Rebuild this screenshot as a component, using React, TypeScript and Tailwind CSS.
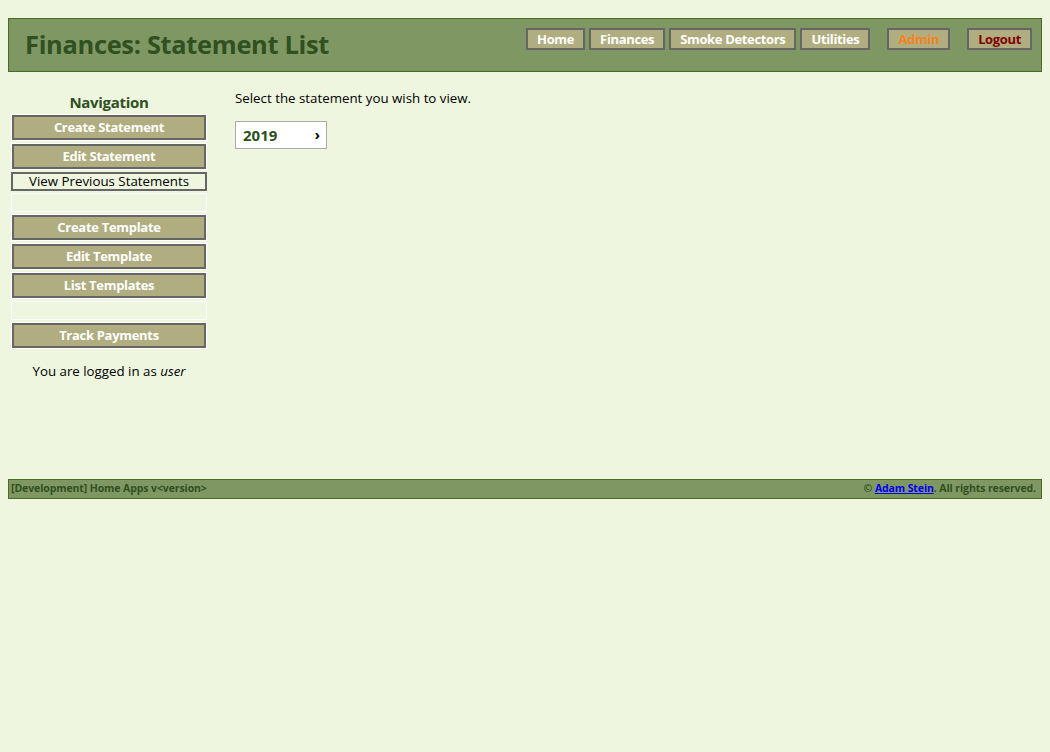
import React from "react";

const navBtn =
  "block w-full h-[25px] bg-[#b0ae80] border-2 border-[#666666] text-white font-bold text-[13px] tracking-[-0.3px] leading-[21px] text-center";

const topBtn =
  "h-[22px] px-[9px] bg-[#b0ae80] border-2 border-[#666666] leading-[18px] text-[13px] tracking-[-0.35px]";

function Cell({ children }: { children?: React.ReactNode }) {
  return <div className="border border-white h-[27px] w-[196px]">{children}</div>;
}

export default function App() {
  return (
    <div
      className="min-h-[752px] w-full bg-[#eef6df] pt-[18px] px-[8px]"
      style={{ fontFamily: '"Open Sans", "Noto Sans", sans-serif' }}
    >
      <header className="h-[54px] border border-[#4a6b24] bg-[#7f9763] flex items-center justify-between pl-[16px] pr-[9px]">
        <h1 className="text-[25.4px] font-bold text-[#2f5020] tracking-[-0.3px] leading-[30px] mb-[2px]">
          Finances: Statement List
        </h1>
        <nav className="flex items-center self-start mt-[9px] font-bold">
          <a className={topBtn + " text-white mr-[4px]"}>Home</a>
          <a className={topBtn + " text-white mr-[4px]"}>Finances</a>
          <a className={topBtn + " text-white mr-[4px]"}>Smoke Detectors</a>
          <a className={topBtn + " text-white mr-[17px]"}>Utilities</a>
          <a className={topBtn + " text-[#f58220] mr-[17px]"}>Admin</a>
          <a className={topBtn + " text-[#800000]"}>Logout</a>
        </nav>
      </header>

      <div className="flex h-[407px]">
        <aside className="w-[196px] ml-[3px] mt-[20px] flex flex-col items-center gap-[2px]">
          <div className="text-[15px] tracking-[-0.3px] font-bold text-[#2f5020] leading-[20px]">Navigation</div>
          <Cell><a className={navBtn}>Create Statement</a></Cell>
          <Cell><a className={navBtn}>Edit Statement</a></Cell>
          <div className="border-2 border-[#666666] h-[19px] w-[196px] text-[13.3px] leading-[15px] text-center text-black">
            View Previous Statements
          </div>
          <div className="border border-white h-[19px] w-[196px]" />
          <Cell><a className={navBtn}>Create Template</a></Cell>
          <Cell><a className={navBtn}>Edit Template</a></Cell>
          <Cell><a className={navBtn}>List Templates</a></Cell>
          <div className="border border-white h-[19px] w-[196px]" />
          <Cell><a className={navBtn}>Track Payments</a></Cell>
          <div className="text-[13.3px] text-black mt-[10px] leading-[20px]">
            You are logged in as <i>user</i>
          </div>
        </aside>
        <main className="ml-[28px] mt-[16px]">
          <p className="text-[13.3px] text-black leading-[20px]">Select the statement you wish to view.</p>
          <div className="mt-[13px] w-[92px] h-[28px] bg-white border border-[#aaaaaa] flex items-center justify-between pl-[7px] pr-[6px]">
            <span className="text-[15px] font-bold text-[#2f5020]">2019</span>
            <span className="text-[14px] font-bold text-black leading-none">›</span>
          </div>
        </main>
      </div>

      <footer className="h-[20px] border border-[#4a6b24] bg-[#7f9763] flex items-center justify-between pl-[2px] pr-[5px] text-[10.5px] tracking-[-0.1px] font-bold text-[#2f5020]">
        <span>[Development] Home Apps v&lt;version&gt;</span>
        <span>
          © <a className="text-[#0000ee] underline">Adam Stein</a>. All rights reserved.
        </span>
      </footer>
    </div>
  );
}
